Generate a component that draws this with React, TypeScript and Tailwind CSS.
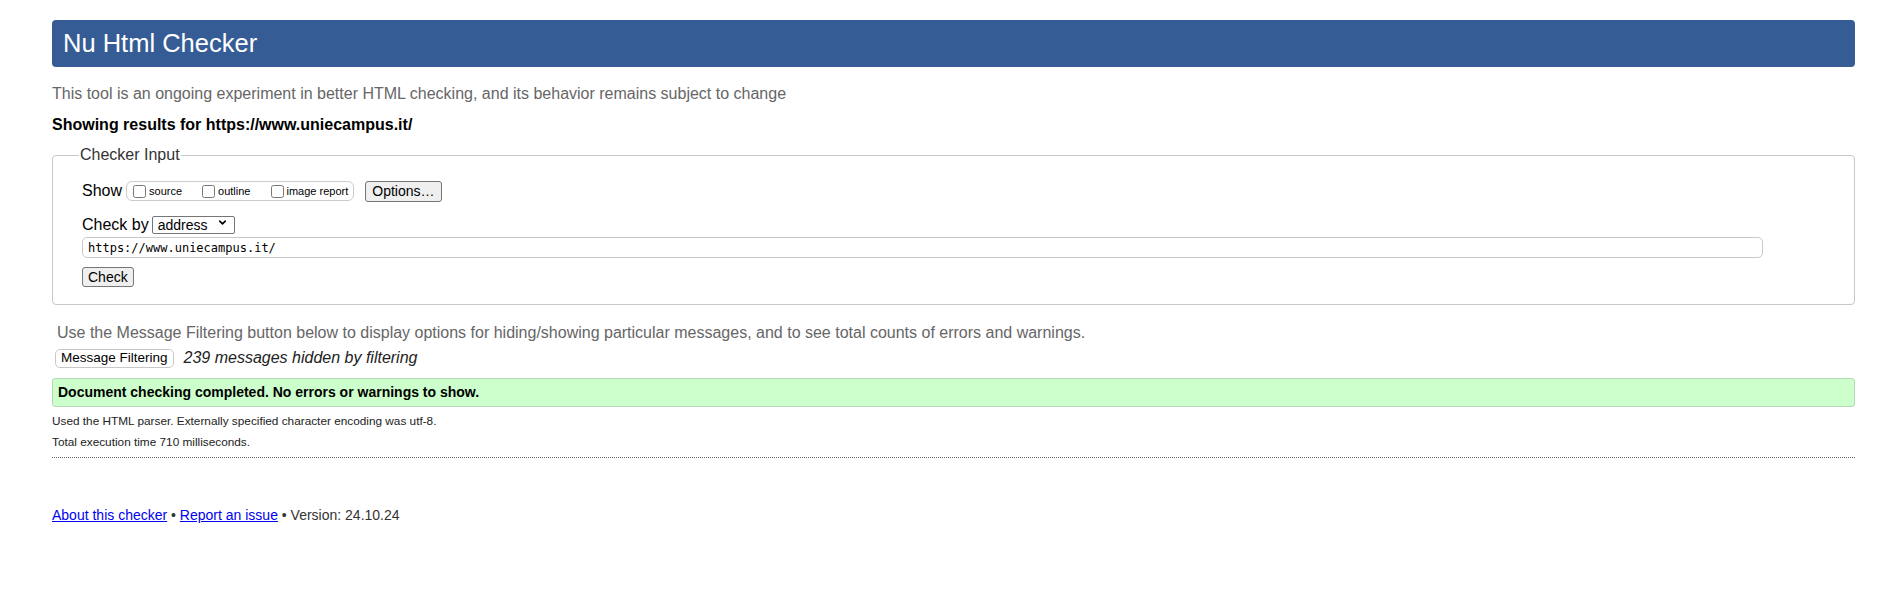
import { ChevronDown } from "lucide-react";

const sans = "font-['Liberation_Sans',Arial,sans-serif]";

function NativeButton({ children, className = "" }: { children: React.ReactNode; className?: string }) {
  return (
    <button
      type="button"
      className={`border border-[#767676] bg-[#efefef] rounded-[3px] text-black leading-none ${className}`}>
      {children}
    </button>
  );
}

export default function App() {
  return (
    <div className={`min-h-[600px] bg-white pl-[52px] pr-[45px] pt-[20px] ${sans}`}>
      {/* header */}
      <h1 className="h-[47px] flex items-center rounded-[4px] bg-[#365c95] pl-[11px] text-[25.5px] text-white">
        Nu Html Checker
      </h1>

      <p className="mt-[17px] text-[16px] leading-[20px] text-[#666]">
        This tool is an ongoing experiment in better HTML checking, and its behavior remains subject to change
      </p>
      <p className="mt-[11px] text-[16px] leading-[20px] font-bold text-black">
        Showing results for https://www.uniecampus.it/
      </p>

      <fieldset className="mt-[10px] rounded-[4px] border border-[#c8c8c8] px-[29px] pb-[15px] pt-[15px]">
        <legend className="ml-[-3px] px-[1px] text-[16px] leading-[20px] text-[#333]">Checker Input</legend>

        <div className="flex items-center h-[22px]">
          <span className="text-[16px] mr-[4px]">Show</span>
          <div className="flex h-[20px] items-center rounded-[6px] border border-[#ccc] pl-[6px] pr-[5px] text-[11px]">
            <label className="flex items-center">
              <input type="checkbox" className="m-0 mr-[3px] h-[13px] w-[13px]" />
              source
            </label>
            <label className="ml-[20px] flex items-center">
              <input type="checkbox" className="m-0 mr-[3px] h-[13px] w-[13px]" />
              outline
            </label>
            <label className="ml-[21px] flex items-center">
              <input type="checkbox" className="m-0 mr-[2px] h-[13px] w-[13px]" />
              image report
            </label>
          </div>
          <NativeButton className="ml-[11px] h-[21px] px-[6px] text-[14px]">Options…</NativeButton>
        </div>

        <div className="mt-[12px] flex items-center h-[22px]">
          <span className="text-[16px] mr-[3px]">Check by</span>
          <div className="relative">
            <select className="h-[18px] w-[83px] appearance-none rounded-[2px] border border-[#767676] pl-[5px] text-[14px] leading-none text-black">
              <option>address</option>
            </select>
            <ChevronDown className="pointer-events-none absolute right-[7px] top-[4px] h-[11px] w-[11px]" strokeWidth={3.5} />
          </div>
        </div>

        <div className="mt-[1px] mr-[62px] flex h-[21px] items-center rounded-[5px] border border-[#c8c8c8] pl-[5px] font-['DejaVu_Sans_Mono',monospace] text-[12px] text-black">
          https://www.uniecampus.it/
        </div>

        <NativeButton className="mt-[9px] h-[20px] px-[5px] text-[14px]">Check</NativeButton>
      </fieldset>

      <p className="mt-[18px] pl-[5px] text-[16px] leading-[20px] text-[#666]">
        Use the Message Filtering button below to display options for hiding/showing particular messages, and to see total counts of errors and warnings.
      </p>

      <div className="mt-[5px] flex items-center h-[20px]">
        <button
          type="button"
          className="ml-[3px] h-[19px] rounded-[5px] border border-[#c8c8c8] bg-white px-[5px] text-[13.5px] leading-none text-black">
          Message Filtering
        </button>
        <span className="ml-[10px] text-[16px] italic text-[#222]">239 messages hidden by filtering</span>
      </div>

      <div className="mt-[10px] flex h-[29px] items-center rounded-[3px] border border-[#b5d9b5] bg-[#ccffcc] pl-[5px] text-[14px] font-bold text-black">
        Document checking completed. No errors or warnings to show.
      </div>

      <p className="mt-[7px] text-[11.8px] leading-[14px] text-[#222]">
        Used the HTML parser. Externally specified character encoding was utf-8.
      </p>
      <p className="mt-[7px] text-[11.8px] leading-[14px] text-[#222]">Total execution time 710 milliseconds.</p>

      <div className="mt-[8px] border-t border-dotted border-[#666]" />

      <p className="mt-[49px] text-[14px] leading-[16px] text-[#333]">
        <a href="#" className="text-[#0000ee] underline">
          About this checker
        </a>{" "}
        •{" "}
        <a href="#" className="text-[#0000ee] underline">
          Report an issue
        </a>{" "}
        • Version: 24.10.24
      </p>
    </div>
  );
}
